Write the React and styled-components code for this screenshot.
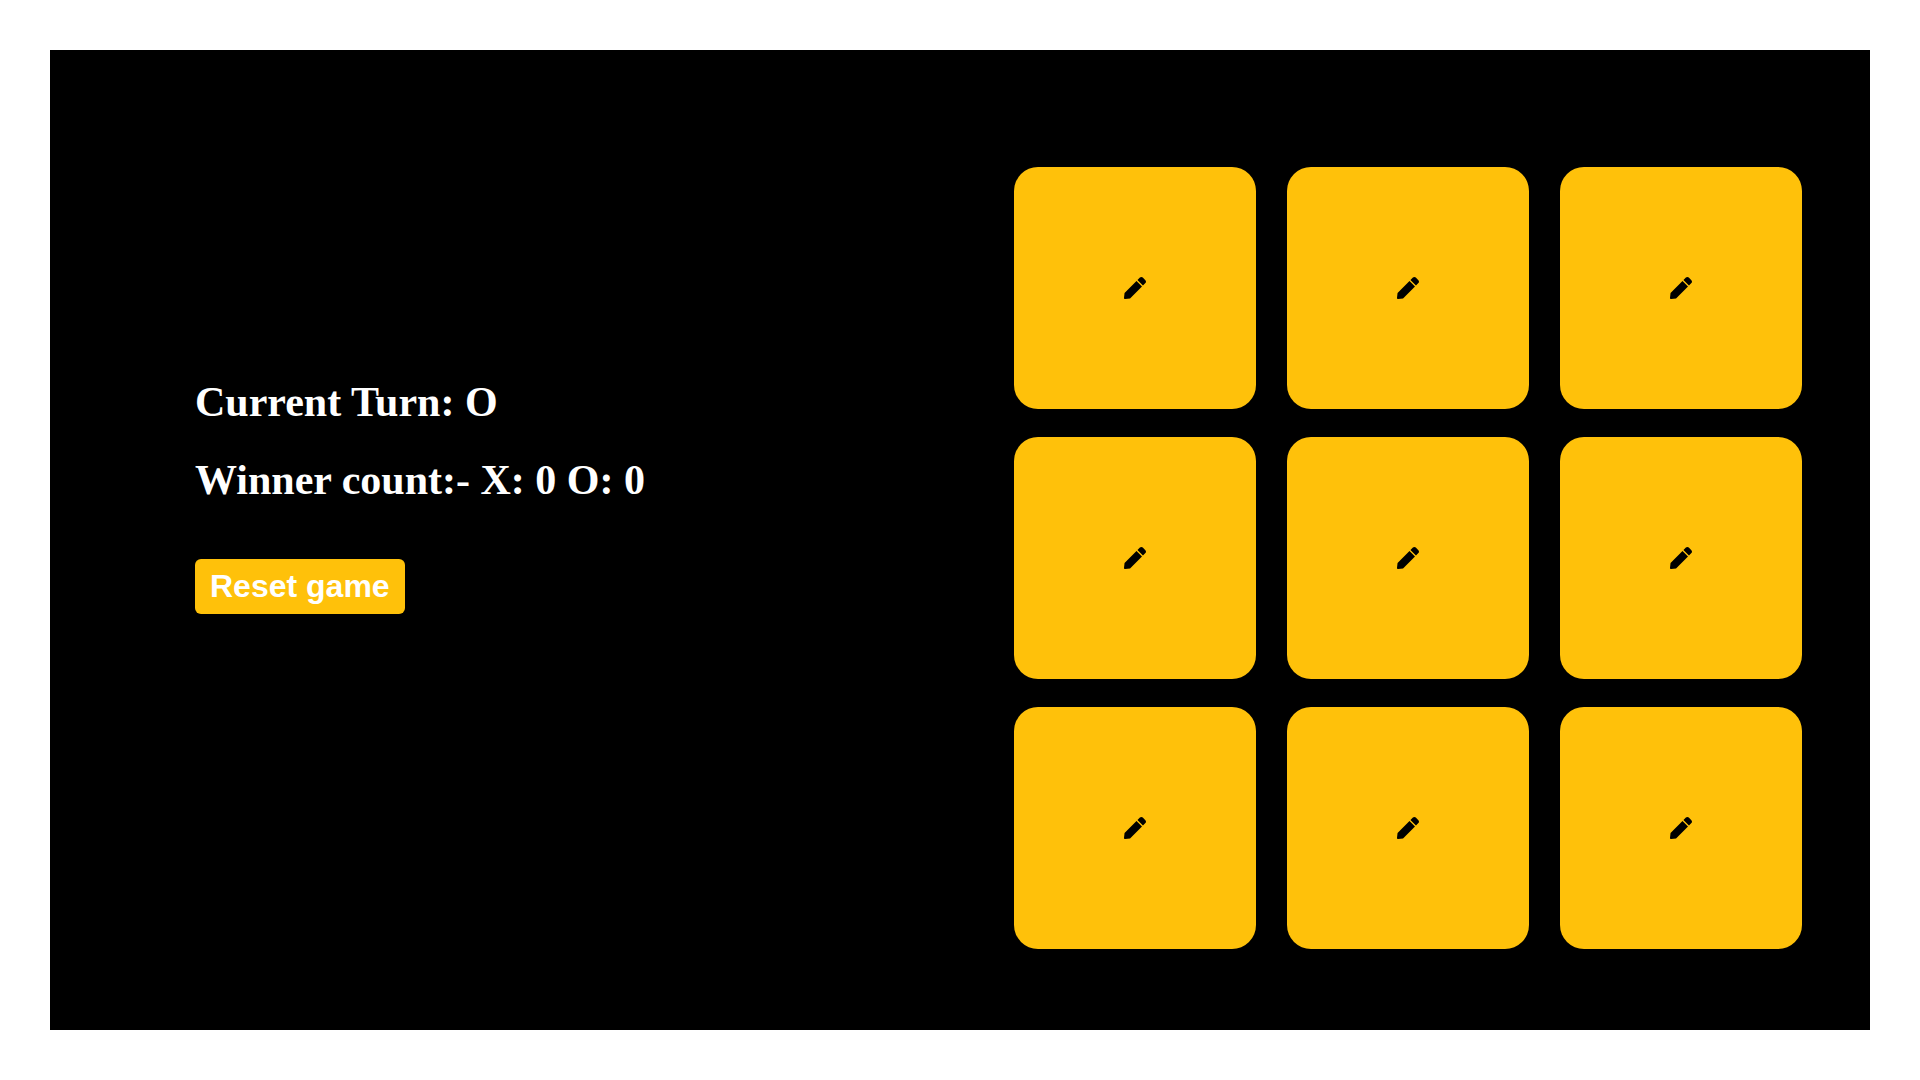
import React, { useState } from "react";
import styled, { createGlobalStyle } from "styled-components";
import { FaPen } from "react-icons/fa";

const GlobalStyle = createGlobalStyle`
  * { box-sizing: border-box; }
  body {
    margin: 0;
    background: #fff;
    font-family: "Liberation Serif", "Times New Roman", serif;
  }
`;

const Page = styled.div`
  min-height: 100vh;
  padding: 50px;
  display: flex;
`;

const Game = styled.main`
  flex: 1;
  display: flex;
  justify-content: space-between;
  align-items: center;
  padding: 0 68px 0 145px;
  background: #000;
  color: #fff;
`;

const Info = styled.section`
  display: flex;
  flex-direction: column;
  align-items: flex-start;
  gap: 30px;
  padding-bottom: 88px;
`;

const Heading = styled.h1`
  margin: 0;
  font-size: 42px;
  line-height: 48px;
  font-weight: 700;
`;

const ResetButton = styled.button`
  margin-top: 25px;
  padding: 8px 15px;
  border: 0;
  border-radius: 6px;
  background: #ffc10a;
  color: #fff;
  font-family: "Liberation Sans", Arial, sans-serif;
  font-size: 32px;
  line-height: 39px;
  font-weight: 700;
  cursor: pointer;
`;

const Board = styled.section`
  display: grid;
  grid-template-columns: repeat(3, 242px);
  gap: 28px 31px;
  padding-top: 36px;
`;

const Cell = styled.button`
  display: flex;
  align-items: center;
  justify-content: center;
  height: 242px;
  padding: 0;
  border: 0;
  border-radius: 24px;
  background: #ffc10a;
  color: #000;
  font-family: inherit;
  font-size: 96px;
  font-weight: 700;
  cursor: pointer;
`;

const LINES = [
  [0, 1, 2], [3, 4, 5], [6, 7, 8],
  [0, 3, 6], [1, 4, 7], [2, 5, 8],
  [0, 4, 8], [2, 4, 6],
];

const EMPTY = Array(9).fill("");

const hasWon = (cells, mark) =>
  LINES.some((line) => line.every((i) => cells[i] === mark));

export default function App() {
  const [cells, setCells] = useState(EMPTY);
  const [turn, setTurn] = useState("O");
  const [wins, setWins] = useState({ X: 0, O: 0 });

  const play = (index) => {
    if (cells[index]) return;
    const next = cells.map((cell, i) => (i === index ? turn : cell));
    if (hasWon(next, turn)) {
      setWins({ ...wins, [turn]: wins[turn] + 1 });
      setCells(EMPTY);
    } else {
      setCells(next.every(Boolean) ? EMPTY : next);
    }
    setTurn(turn === "O" ? "X" : "O");
  };

  const reset = () => {
    setCells(EMPTY);
    setTurn("O");
  };

  return (
    <>
      <GlobalStyle />
      <Page>
        <Game>
          <Info>
            <Heading>{`Current Turn: ${turn}`}</Heading>
            <Heading as="h2">{`Winner count:- X: ${wins.X} O: ${wins.O}`}</Heading>
            <ResetButton type="button" onClick={reset}>Reset game</ResetButton>
          </Info>
          <Board>
            {cells.map((mark, i) => (
              <Cell key={i} type="button" aria-label={`Cell ${i + 1}`} onClick={() => play(i)}>
                {mark || <FaPen size={22} />}
              </Cell>
            ))}
          </Board>
        </Game>
      </Page>
    </>
  );
}
